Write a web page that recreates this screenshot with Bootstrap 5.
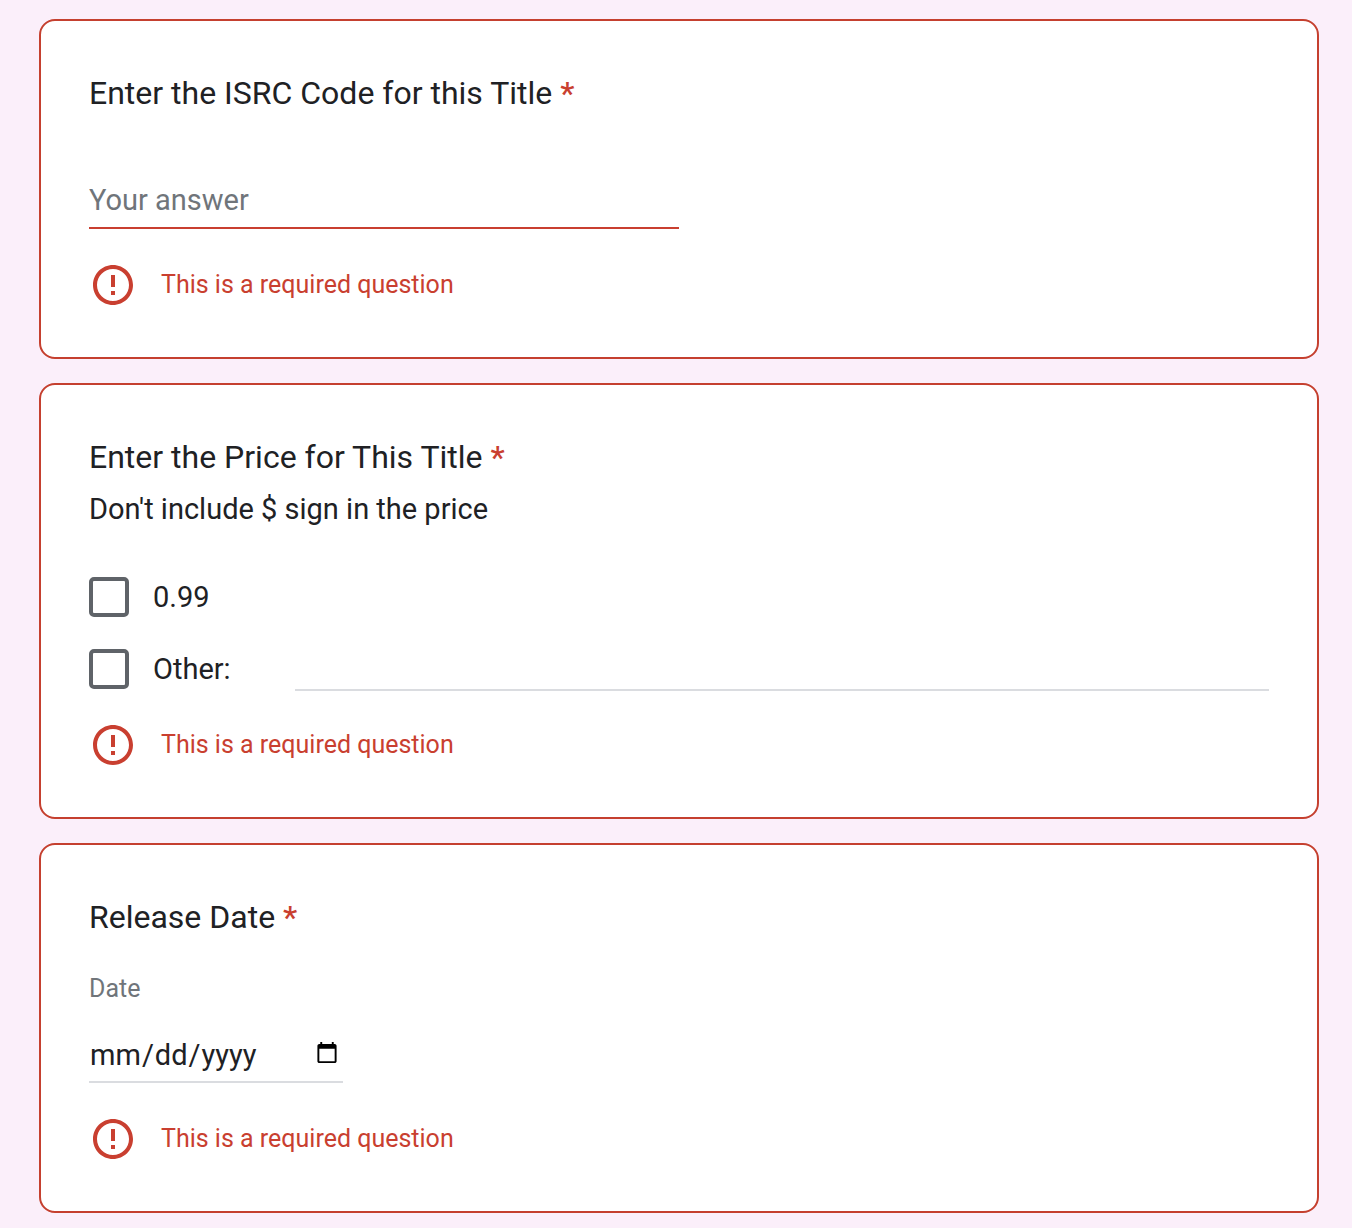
<!DOCTYPE html>
<html lang="en">
<head>
<meta charset="utf-8">
<meta name="viewport" content="width=device-width, initial-scale=1">
<title>Title details</title>
<link href="https://cdn.jsdelivr.net/npm/bootstrap@5.3.0/dist/css/bootstrap.min.css" rel="stylesheet">
<style>
body { background: #fbeffa; color: #202124; font-family: Roboto, "Liberation Sans", sans-serif; font-size: 29px; line-height: 40px; }
.form-list { padding: 19px 33px 15px 39px; }
.question { border: 2px solid #c5402f; border-radius: 16px; padding: 48px; background: #fff; }
.q-title { font-size: 32px; line-height: 48px; font-weight: 400; margin: 0; color: inherit; }
.q-star, .q-error { color: #c93f30; }
.q-star { font-weight: 500; }
.q-help { margin: 8px 0 48px; }
.line-input { border: 0; border-bottom: 2px solid #dadce0; border-radius: 0; background: transparent; padding: 0; height: 54px; color: inherit; font-size: 29px; line-height: 40px; }
.line-input:focus { box-shadow: none; background: transparent; }
.line-input::placeholder { color: #70757a; opacity: 1; }
.answer { width: 50%; height: 56px; margin-top: 56px; border-bottom-color: #c93f30; }
.q-error { font-size: 25px; line-height: 48px; gap: 24px; margin-top: 32px; }
.q-error svg { width: 48px; height: 48px; flex: none; }
.choices { gap: 32px; }
.choice { gap: 24px; height: 40px; }
.form-check-input.box { width: 40px; height: 40px; border: 4px solid #5f6368; border-radius: 5px; margin: 0; flex: none; }
.other-input { margin-left: 40px; height: 44px; }
.date-label { font-size: 25px; line-height: 40px; color: #70757a; margin: 28px 0 20px; }
.date-input { width: 254px; padding: 0; }
.date-input::-webkit-datetime-edit-month-field,
.date-input::-webkit-datetime-edit-day-field,
.date-input::-webkit-datetime-edit-year-field { padding: 0 1px; }
.date-input::-webkit-calendar-picker-indicator { width: 24px; height: 24px; padding: 0; margin: 0 4px 4px 0; }
</style>
<script src="https://cdn.jsdelivr.net/npm/bootstrap@5.3.0/dist/js/bootstrap.bundle.min.js"></script>
</head>
<body>
<svg class="d-none" aria-hidden="true">
  <symbol id="alert-ring" viewBox="0 0 24 24"><path fill="currentColor" d="M11 15h2v2h-2zm0-8h2v6h-2zm.99-5C6.47 2 2 6.48 2 12s4.470 10 9.990 10C17.520 22 22 17.520 22 12S17.520 2 11.990 2zM12 20c-4.420 0-8-3.580-8-8s3.580-8 8-8 8 3.580 8 8-3.580 8-8 8z"/></symbol>
</svg>
<form class="form-list d-flex flex-column gap-4" novalidate>
  <section class="question">
    <h2 class="q-title"><label for="isrc">Enter the ISRC Code for this Title <span class="q-star">*</span></label></h2>
    <input id="isrc" class="form-control line-input answer" type="text" placeholder="Your answer" aria-describedby="isrc-error">
    <div id="isrc-error" class="q-error d-flex align-items-center"><svg aria-hidden="true"><use href="#alert-ring"/></svg><span>This is a required question</span></div>
  </section>
  <section class="question">
    <h2 class="q-title">Enter the Price for This Title <span class="q-star">*</span></h2>
    <p class="q-help">Don't include $ sign in the price</p>
    <div class="choices d-flex flex-column">
      <div class="choice d-flex align-items-center">
        <input id="price99" class="form-check-input box" type="checkbox">
        <label for="price99">0.99</label>
      </div>
      <div class="choice d-flex align-items-center">
        <input id="priceOther" class="form-check-input box" type="checkbox">
        <label for="priceOther">Other:</label>
        <input class="form-control line-input other-input" type="text" aria-label="Other price">
      </div>
    </div>
    <div class="q-error d-flex align-items-center"><svg aria-hidden="true"><use href="#alert-ring"/></svg><span>This is a required question</span></div>
  </section>
  <section class="question">
    <h2 class="q-title">Release Date <span class="q-star">*</span></h2>
    <label class="date-label d-block" for="release">Date</label>
    <input id="release" class="form-control line-input date-input" type="date">
    <div class="q-error d-flex align-items-center"><svg aria-hidden="true"><use href="#alert-ring"/></svg><span>This is a required question</span></div>
  </section>
</form>
</body>
</html>
